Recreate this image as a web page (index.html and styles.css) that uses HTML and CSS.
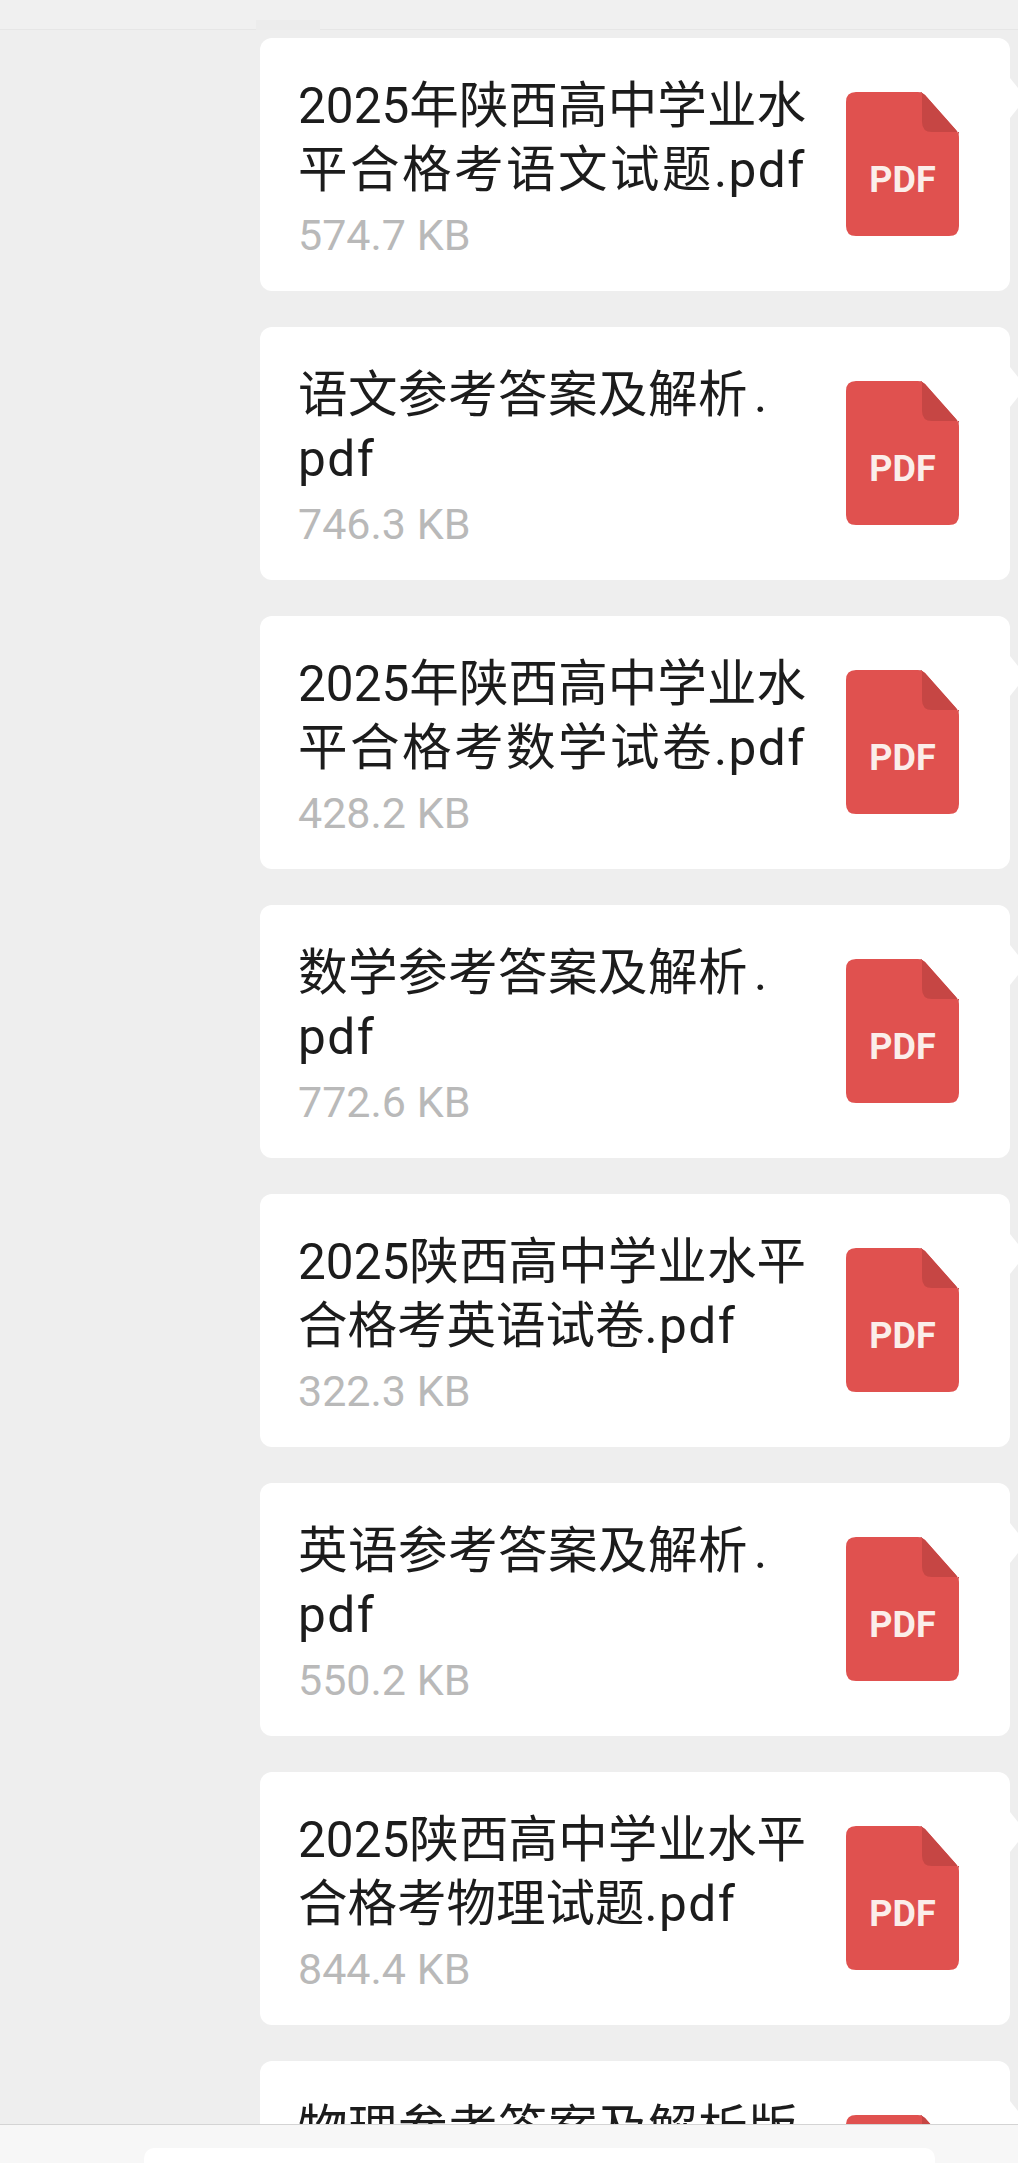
FILE: index.html
```html
<!DOCTYPE html>
<html lang="zh">
<head>
<meta charset="utf-8">
<title>PDF files</title>
<link rel="stylesheet" href="styles.css">
</head>
<body>
<div class="page">
  <header class="topbar"><span class="smudge"></span></header>
  <main class="list">
    <article class="card"><div class="info"><h3 class="name fill">2025年陕西高中学业水平合格考语文试题<span class="ext">.pdf</span></h3><p class="size">574.7 KB</p></div><svg class="icon" viewBox="0 0 113 144"><use href="#pdf"/></svg><span class="label">PDF</span></article>
    <article class="card"><div class="info"><h3 class="name spaced">语文参考答案及解析<span class="dot">.</span><br><span class="ext">pdf</span></h3><p class="size">746.3 KB</p></div><svg class="icon" viewBox="0 0 113 144"><use href="#pdf"/></svg><span class="label">PDF</span></article>
    <article class="card"><div class="info"><h3 class="name fill">2025年陕西高中学业水平合格考数学试卷<span class="ext">.pdf</span></h3><p class="size">428.2 KB</p></div><svg class="icon" viewBox="0 0 113 144"><use href="#pdf"/></svg><span class="label">PDF</span></article>
    <article class="card"><div class="info"><h3 class="name spaced">数学参考答案及解析<span class="dot">.</span><br><span class="ext">pdf</span></h3><p class="size">772.6 KB</p></div><svg class="icon" viewBox="0 0 113 144"><use href="#pdf"/></svg><span class="label">PDF</span></article>
    <article class="card"><div class="info"><h3 class="name wide">2025陕西高中学业水平合格考英语试卷<span class="ext">.pdf</span></h3><p class="size">322.3 KB</p></div><svg class="icon" viewBox="0 0 113 144"><use href="#pdf"/></svg><span class="label">PDF</span></article>
    <article class="card"><div class="info"><h3 class="name spaced">英语参考答案及解析<span class="dot">.</span><br><span class="ext">pdf</span></h3><p class="size">550.2 KB</p></div><svg class="icon" viewBox="0 0 113 144"><use href="#pdf"/></svg><span class="label">PDF</span></article>
    <article class="card"><div class="info"><h3 class="name wide">2025陕西高中学业水平合格考物理试题<span class="ext">.pdf</span></h3><p class="size">844.4 KB</p></div><svg class="icon" viewBox="0 0 113 144"><use href="#pdf"/></svg><span class="label">PDF</span></article>
    <article class="card"><div class="info"><h3 class="name spaced">物理参考答案及解析版</h3></div><svg class="icon" viewBox="0 0 113 144"><use href="#pdf"/></svg></article>
  </main>
  <footer class="bottombar"><div class="input"></div></footer>
</div>
<svg class="defs" width="0" height="0" aria-hidden="true">
  <defs>
    <g id="pdf">
      <path fill="#e0514f" d="M10 0H72Q76 0 79 3L110 38Q113 41 113 46V134Q113 144 103 144H10Q0 144 0 134V10Q0 0 10 0Z"/>
      <path fill="#c64644" d="M72 0Q76 0 79 3L110 38Q113 41 113 44V40H86Q76 40 76 30V0Z"/>
    </g>
  </defs>
</svg>
</body>
</html>
```

FILE: styles.css
```css
* { box-sizing: border-box; }
html, body { margin: 0; padding: 0; }
body { background: #eeeeee; font-family: "Roboto", "Noto Sans CJK SC", sans-serif; }
.page { width: 1018px; height: 2163px; display: flex; flex-direction: column; overflow: hidden; }
.topbar { position: relative; flex: 0 0 30px; background: #f0f0f0; border-bottom: 1px solid #e6e6e6; }
.smudge { position: absolute; left: 256px; top: 20px; width: 64px; height: 10px; background: #ececec; }
.list { position: relative; flex: 1 1 auto; min-height: 0; overflow: hidden; padding: 8px 8px 0 260px; display: flex; flex-direction: column; gap: 36px; }
.card { position: relative; flex: 0 0 253px; width: 750px; background: #fff; border-radius: 12px; padding: 36px 38px 0; display: flex; justify-content: space-between; }
.card::after { content: ""; position: absolute; left: 100%; top: 40px; width: 8px; height: 40px; background: #fff; clip-path: polygon(0 0, 100% 10px, 100% 30px, 0 100%); }
.info { width: 508px; }
.name { margin: 0; font-weight: 400; font-size: 49.5px; line-height: 64px; color: #1c1c1c; word-break: break-all; }
.fill { text-align: justify; text-align-last: justify; }
.wide { text-align: justify; }
.spaced { letter-spacing: .5px; }
.dot { margin-left: 6px; }
.ext { letter-spacing: 1.5px; }
.size { margin: 3px 0 0; font-size: 43px; line-height: 60px; color: #b9b9b9; }
.icon { position: absolute; left: 586px; top: 54px; width: 113px; height: 144px; }
.label { position: absolute; left: 586px; top: 54px; width: 113px; margin-top: 66px; text-align: center; font-family: "Roboto", sans-serif; font-weight: 700; font-size: 36px; line-height: 44px; color: #fbeeea; }
.bottombar { flex: 0 0 39px; min-height: 0; overflow: hidden; background: #f7f7f7; border-top: 1px solid #d4d4d4; padding: 23px 83px 0 144px; position: relative; z-index: 1; }
.input { height: 40px; background: #fff; border-radius: 10px 10px 0 0; }
.defs { position: absolute; }
```
